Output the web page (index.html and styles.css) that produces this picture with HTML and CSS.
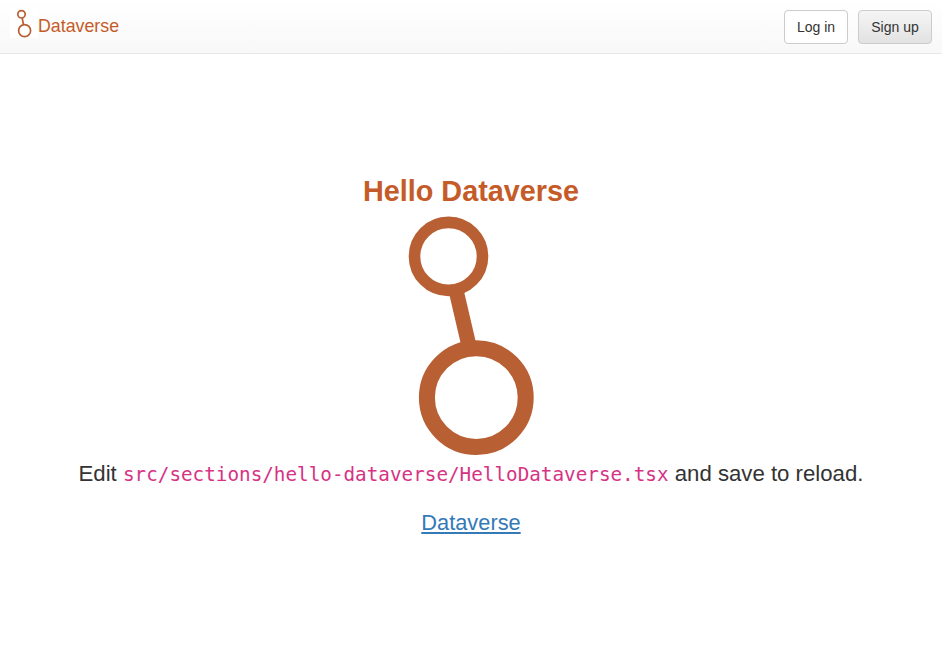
FILE: index.html
```html
<!DOCTYPE html>
<html lang="en">
<head>
<meta charset="utf-8">
<title>Hello Dataverse</title>
<link rel="stylesheet" href="styles.css">
</head>
<body>
<header class="navbar">
  <a class="brand" href="#">
    <span class="brand-mark">
      <svg width="28" height="30" viewBox="10 8 28 30" aria-hidden="true">
        <circle cx="21.5" cy="14.3" r="3.7" class="ring-thin"/>
        <path d="M22.2 18 L23.4 24.4" class="ring-thin"/>
        <circle cx="24.6" cy="30.7" r="6" class="ring-thin"/>
      </svg>
    </span>
    <span class="brand-name">Dataverse</span>
  </a>
  <nav class="actions">
    <a class="btn btn-login" href="#">Log in</a>
    <a class="btn btn-signup" href="#">Sign up</a>
  </nav>
</header>
<main class="hero">
  <h1 class="title">Hello Dataverse</h1>
  <svg class="logo" width="240" height="245" viewBox="351 215 240 245" aria-hidden="true">
    <path d="M455.5 288 L469.5 348" class="ring-stem"/>
    <circle cx="448.5" cy="256.4" r="34" class="ring-small"/>
    <circle cx="476.3" cy="397.6" r="49.4" class="ring-large"/>
  </svg>
  <p class="lead">Edit <code class="path">src/sections/hello-dataverse/HelloDataverse.tsx</code> and save to reload.</p>
  <p class="lead link-row"><a class="link" href="#">Dataverse</a></p>
</main>
</body>
</html>
```
FILE: styles.css
```css
* { box-sizing: border-box; }
html, body { margin: 0; padding: 0; }
body {
  background: #fff;
  color: #333;
  font-family: "Liberation Sans", Arial, sans-serif;
  min-height: 656px;
}
.navbar {
  display: flex;
  justify-content: space-between;
  align-items: flex-start;
  height: 54px;
  padding: 0 10px;
  background: linear-gradient(to bottom, #fff 0%, #f8f8f8 100%);
  border-bottom: 1px solid #e7e7e7;
}
.brand {
  display: flex;
  align-items: flex-start;
  height: 53px;
  color: #c55b28;
  font-size: 17.8px;
  line-height: 24px;
  text-decoration: none;
}
.brand-mark {
  display: block;
  width: 28px;
  height: 30px;
  background: #fff;
  margin-top: 8px;
}
.brand-mark svg { display: block; }
.brand-name { margin-top: 14px; }
.ring-thin { fill: none; stroke: #b85f33; stroke-width: 1.7; }
.actions {
  display: flex;
  gap: 10px;
  padding-top: 10px;
}
.btn {
  display: block;
  height: 34px;
  border: 1px solid #ccc;
  border-radius: 4px;
  background: #fff;
  color: #333;
  font-size: 14px;
  line-height: 32px;
  text-align: center;
  text-decoration: none;
}
.btn-login { width: 64px; }
.btn-signup {
  width: 74px;
  background: linear-gradient(to bottom, #f5f5f5 0%, #e2e2e2 100%);
}
.hero {
  display: flex;
  flex-direction: column;
  align-items: center;
  padding-top: 119px;
}
.title {
  margin: 0;
  color: #c55b28;
  font-size: 28.8px;
  line-height: 36px;
  font-weight: 700;
}
.logo { display: block; margin-top: 6px; }
.ring-small { fill: #fff; stroke: #b85f33; stroke-width: 11.6; }
.ring-large { fill: #fff; stroke: #b85f33; stroke-width: 16; }
.ring-stem { fill: none; stroke: #b85f33; stroke-width: 15; }
.lead {
  margin: -1px 0 0;
  font-size: 22.2px;
  line-height: 30px;
  color: #333;
}
.path {
  font-family: "DejaVu Sans Mono", "Liberation Mono", monospace;
  font-size: 19.3px;
  color: #d63384;
}
.link-row { margin-top: 18px; font-size: 21.8px; }
.link { color: #337ab7; }
```
